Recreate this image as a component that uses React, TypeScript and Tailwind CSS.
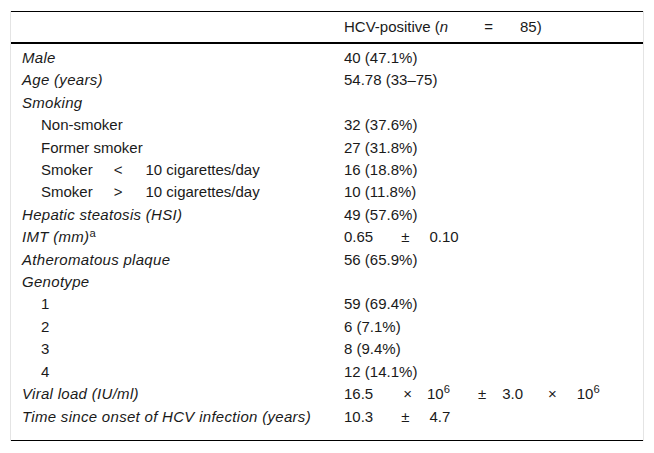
type Row = {
  label: React.ReactNode;
  value?: React.ReactNode;
  italic?: boolean;
  indent?: boolean;
};

const rows: Row[] = [
  { label: 'Male', value: '40 (47.1%)', italic: true },
  { label: 'Age (years)', value: '54.78 (33–75)', italic: true },
  { label: 'Smoking', italic: true },
  { label: 'Non-smoker', value: '32 (37.6%)', indent: true },
  { label: 'Former smoker', value: '27 (31.8%)', indent: true },
  {
    label: (
      <>
        Smoker<span className="ml-[21px] mr-[23px]">&lt;</span>10 cigarettes/day
      </>
    ),
    value: '16 (18.8%)',
    indent: true,
  },
  {
    label: (
      <>
        Smoker<span className="ml-[21px] mr-[23px]">&gt;</span>10 cigarettes/day
      </>
    ),
    value: '10 (11.8%)',
    indent: true,
  },
  { label: 'Hepatic steatosis (HSI)', value: '49 (57.6%)', italic: true },
  {
    label: (
      <>
        IMT (mm)<sup className="not-italic">a</sup>
      </>
    ),
    value: (
      <>
        0.65<span className="ml-[28px] mr-[20px]">±</span>0.10
      </>
    ),
    italic: true,
  },
  { label: 'Atheromatous plaque', value: '56 (65.9%)', italic: true },
  { label: 'Genotype', italic: true },
  { label: '1', value: '59 (69.4%)', indent: true },
  { label: '2', value: '6 (7.1%)', indent: true },
  { label: '3', value: '8 (9.4%)', indent: true },
  { label: '4', value: '12 (14.1%)', indent: true },
  {
    label: 'Viral load (IU/ml)',
    value: (
      <>
        16.5<span className="ml-[30px] mr-[15px]">×</span>10
        <sup>6</sup>
        <span className="ml-[28px] mr-[16px]">±</span>3.0
        <span className="ml-[25px] mr-[20px]">×</span>10
        <sup>6</sup>
      </>
    ),
    italic: true,
  },
  {
    label: 'Time since onset of HCV infection (years)',
    value: (
      <>
        10.3<span className="ml-[28px] mr-[20px]">±</span>4.7
      </>
    ),
    italic: true,
  },
];

export default function App() {
  return (
    <div
      className="w-[654px] h-[453px] bg-white text-[#1a1a1a] pt-[11px] pl-[10px]"
      style={{ fontFamily: '"Liberation Sans", Arial, sans-serif' }}
    >
      <div className="w-[634px] border-x border-[#e4e4e4]">
        {/* Header */}
        <div className="flex h-[33px] items-center border-t border-b-[2px] border-black text-[15px]">
          <div className="w-[333px]" />
          <div>
            HCV-positive (<span className="italic">n</span>
            <span className="ml-[36px] mr-[27px]">=</span>85)
          </div>
        </div>

        {/* Body */}
        <div className="pt-[3px] pb-[12px] border-b border-black text-[15px] leading-[22.4px]">
          {rows.map((row, i) => (
            <div key={i} className="flex">
              <div
                className={`w-[333px] ${row.indent ? 'pl-[30px]' : 'pl-[11px]'} ${
                  row.italic ? 'italic tracking-[0.3px]' : ''
                }`}
              >
                {row.label}
              </div>
              <div>{row.value}</div>
            </div>
          ))}
        </div>
      </div>
    </div>
  );
}
